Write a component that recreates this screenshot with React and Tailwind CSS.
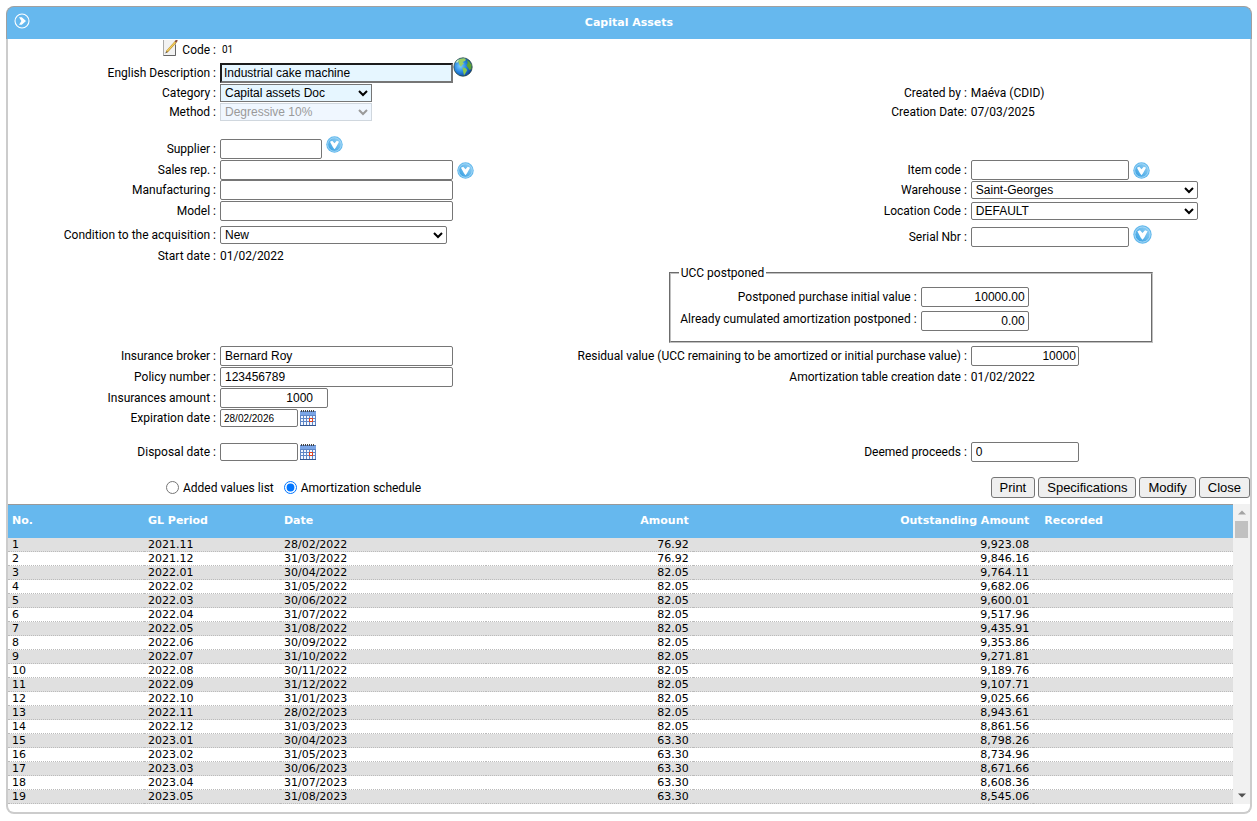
import React, { useState } from 'react'
import clsx from 'clsx'

const schedule = [
    ['2021.11', '28/02/2022', '76.92', '9,923.08'],
    ['2021.12', '31/03/2022', '76.92', '9,846.16'],
    ['2022.01', '30/04/2022', '82.05', '9,764.11'],
    ['2022.02', '31/05/2022', '82.05', '9,682.06'],
    ['2022.03', '30/06/2022', '82.05', '9,600.01'],
    ['2022.04', '31/07/2022', '82.05', '9,517.96'],
    ['2022.05', '31/08/2022', '82.05', '9,435.91'],
    ['2022.06', '30/09/2022', '82.05', '9,353.86'],
    ['2022.07', '31/10/2022', '82.05', '9,271.81'],
    ['2022.08', '30/11/2022', '82.05', '9,189.76'],
    ['2022.09', '31/12/2022', '82.05', '9,107.71'],
    ['2022.10', '31/01/2023', '82.05', '9,025.66'],
    ['2022.11', '28/02/2023', '82.05', '8,943.61'],
    ['2022.12', '31/03/2023', '82.05', '8,861.56'],
    ['2023.01', '30/04/2023', '63.30', '8,798.26'],
    ['2023.02', '31/05/2023', '63.30', '8,734.96'],
    ['2023.03', '30/06/2023', '63.30', '8,671.66'],
    ['2023.04', '31/07/2023', '63.30', '8,608.36'],
    ['2023.05', '31/08/2023', '63.30', '8,545.06'],
]

const LookupIcon = ({ size = 17 }) => (
    <svg width={size} height={size} viewBox="0 0 18 18" aria-hidden="true">
        <defs>
            <linearGradient id="lookup" x1="0" y1="1" x2="1" y2="0">
                <stop offset="0" stopColor="#2f9be0" />
                <stop offset="1" stopColor="#9ad4f6" />
            </linearGradient>
        </defs>
        <circle cx="9" cy="9" r="8.7" fill="#62b8ec" />
        <circle cx="9" cy="9" r="7.2" fill="url(#lookup)" stroke="#b5dff8" strokeWidth="0.8" />
        <path d="M4.2 6 L6.6 5 L9 7.6 L11.4 5 L13.8 6 L10.6 12 L9 14 L7.4 12 Z" fill="#fff" />
    </svg>
)

const GlobeIcon = () => (
    <svg width="20" height="20" viewBox="0 0 20 20" aria-hidden="true">
        <defs>
            <radialGradient id="globe" cx="0.35" cy="0.45" r="0.65">
                <stop offset="0" stopColor="#7fd0ff" />
                <stop offset="0.5" stopColor="#2787e2" />
                <stop offset="1" stopColor="#0b3f94" />
            </radialGradient>
        </defs>
        <circle cx="10" cy="10" r="9.2" fill="url(#globe)" stroke="#2c4a3c" strokeWidth="0.8" />
        <path d="M5 3 Q8 .9 12 1.4 L13 3 L11 4.5 L9.5 5 L11 6.5 L9 8 L8 10 L6.5 8 L5.5 5.5 Z" fill="#9ccf62" />
        <path d="M14 3 L16.5 4.8 L18.6 8 L18.4 12 L16.5 13 L15 10.5 L13.4 8.5 L14.8 6 Z" fill="#5ea336" />
        <path d="M9.4 10.4 L12.4 11 L14.2 13 L12.6 16 L11 18.4 L10.2 14.8 Z" fill="#8ac84c" />
        <path d="M2.6 5.6 Q4 3 6 2.4 L4.6 5.4 Z" fill="#d6f2c0" />
    </svg>
)

const CalendarIcon = () => (
    <svg width="16" height="16" viewBox="0 0 16 16" shapeRendering="crispEdges" aria-hidden="true">
        <rect x="0" y="1" width="16" height="15" fill="#5f86c6" />
        <rect x="0" y="2" width="16" height="3" fill="#7ba5e6" />
        <rect x="0" y="15" width="16" height="1" fill="#34568f" />
        <path d="M1 0h1v2h-1zM3 0h1v2h-1zM5 0h1v2h-1zM7 0h1v2h-1zM9 0h1v2h-1zM11 0h1v2h-1zM13 0h1v2h-1z" fill="#444" />
        <path d="M1 6h2v2h-2zM4 6h2v2h-2zM7 6h2v2h-2zM10 6h2v2h-2zM13 6h2v2h-2zM1 9h2v2h-2zM4 9h2v2h-2zM7 9h2v2h-2zM13 9h2v2h-2zM1 12h2v3h-2zM4 12h2v3h-2zM7 12h2v3h-2zM10 12h2v3h-2zM13 12h2v3h-2z" fill="#f2f7ff" />
        <path d="M9 8h4v4h-4z" fill="#e0431f" />
        <path d="M10 9h2v2h-2z" fill="#fff" />
    </svg>
)

const EditIcon = () => (
    <svg width="15" height="16" viewBox="0 0 15 16" aria-hidden="true">
        <path d="M0.5 0V15.5H12.5V0" fill="#f2f2f2" stroke="#aaa" />
        <path d="M0.5 15.5H12.5V5" fill="none" stroke="#666" />
        <path d="M3.6 12 L12.8 1.8" stroke="#b98a2c" strokeWidth="2.2" />
        <path d="M4 11.4 L12.6 1.8" stroke="#f8d662" strokeWidth="1.1" />
        <path d="M12.4 2.2 L14.2 0.2" stroke="#8a4a3a" strokeWidth="1.8" />
        <path d="M2.6 13.2 L4 11.6" stroke="#333" strokeWidth="1" />
    </svg>
)

const Row = ({ label, id, side = 'left', className, children }) => {
    const labelClass = clsx(
        'shrink-0 text-right whitespace-nowrap leading-5',
        side === 'left' ? 'w-[208px]' : 'w-[62%]'
    )
    return (
        <div className={clsx('flex gap-1', className)}>
            {id ? <label htmlFor={id} className={labelClass}>{label}</label> : <span className={labelClass}>{label}</span>}
            {children}
        </div>
    )
}

const TextBox = ({ className, ...props }) => (
    <input
        type="text"
        className={clsx('rounded-[2px] border border-[#767676] font-["Liberation_Sans",Arial,sans-serif]', className)}
        {...props}
    />
)

const Select = ({ className, options, ...props }) => (
    <select
        className={clsx('rounded-[2px] border font-["Liberation_Sans",Arial,sans-serif] text-xs leading-4', className)}
        {...props}
    >
        {options.map((option) => <option key={option}>{option}</option>)}
    </select>
)

const IconButton = ({ label, className, children }) => (
    <button type="button" aria-label={label} className={clsx('shrink-0', className)}>{children}</button>
)

const LeftFields = () => (
    <div className="flex w-[40%] flex-col">
        <Row
            className="h-[22px] items-center"
            label={<span className="flex justify-end gap-1"><EditIcon />Code :</span>}
        >
            <span className="pl-0.5 text-[10px] leading-5">01</span>
        </Row>
        <Row label="English Description :" id="description" className="h-[22px] items-end">
            <div className="flex items-end">
                <TextBox
                    id="description"
                    defaultValue="Industrial cake machine"
                    className="h-5 w-[233px] rounded-none border-2 border-t-[#1c1c1c] border-r-[#767676] border-b-[#767676] border-l-[#1c1c1c] bg-[#e6f6ff] px-0.5 text-xs"
                />
                <IconButton label="Translations" className="mb-1.5"><GlobeIcon /></IconButton>
            </div>
        </Row>
        <Row label="Category :" id="category" className="mt-px h-[18px] items-center">
            <Select id="category" options={['Capital assets Doc']} className="h-[18px] w-[152px] rounded-none border-[#767676] bg-[#e6f6ff]" />
        </Row>
        <Row label="Method :" id="method" className="mt-px h-[18px] items-center">
            <Select id="method" disabled options={['Degressive 10%']} className="h-[18px] w-[152px] rounded-none border-[#d0d7de] bg-[#f0f7ff] text-[#9a9a9a]" />
        </Row>
        <Row label="Supplier :" id="supplier" className="mt-[15px] h-[23px] items-end">
            <TextBox id="supplier" className="h-5 w-[102px] px-1 text-xs" />
            <IconButton label="Find supplier" className="self-start"><LookupIcon /></IconButton>
        </Row>
        <Row label="Sales rep. :" id="sales-rep" className="mt-px h-5 items-center">
            <TextBox id="sales-rep" className="h-5 w-[233px] px-1 text-xs" />
            <IconButton label="Find sales rep."><LookupIcon /></IconButton>
        </Row>
        <Row label="Manufacturing :" id="manufacturing" className="h-5 items-center">
            <TextBox id="manufacturing" className="h-5 w-[233px] px-1 text-xs" />
        </Row>
        <Row label="Model :" id="model" className="mt-px h-5 items-center">
            <TextBox id="model" className="h-5 w-[233px] px-1 text-xs" />
        </Row>
        <Row label="Condition to the acquisition :" id="condition" className="mt-1 h-5 items-center">
            <Select id="condition" options={['New']} className="h-[18px] w-[227px] border-[#767676]" />
        </Row>
        <Row label="Start date :" className="h-[22px] items-center">
            <span>01/02/2022</span>
        </Row>
        <Row label="Insurance broker :" id="broker" className="mt-[79px] h-5 items-center">
            <TextBox id="broker" defaultValue="Bernard Roy" className="h-5 w-[233px] px-1 text-xs" />
        </Row>
        <Row label="Policy number :" id="policy" className="mt-px h-5 items-center">
            <TextBox id="policy" defaultValue="123456789" className="h-5 w-[233px] px-1 text-xs" />
        </Row>
        <Row label="Insurances amount :" id="insured" className="mt-px h-5 items-center">
            <TextBox id="insured" defaultValue="1000" className="h-5 w-[108px] pr-3.5 text-right text-xs" />
        </Row>
        <Row label="Expiration date :" id="expiration" className="mt-px h-[18px] items-center">
            <div className="flex items-center gap-0.5">
                <TextBox id="expiration" defaultValue="28/02/2026" className="h-[18px] w-[78px] px-[3px] text-[10px]" />
                <IconButton label="Pick expiration date"><CalendarIcon /></IconButton>
            </div>
        </Row>
        <Row label="Disposal date :" id="disposal" className="mt-4 h-[18px] items-center">
            <div className="flex items-center gap-0.5">
                <TextBox id="disposal" className="h-[18px] w-[78px] px-[3px] text-[10px]" />
                <IconButton label="Pick disposal date"><CalendarIcon /></IconButton>
            </div>
        </Row>
    </div>
)

const RightFields = () => (
    <div className="flex flex-1 flex-col">
        <Row side="right" label="Created by :" className="mt-[45px] h-[18px] items-center">
            <span>Maéva (CDID)</span>
        </Row>
        <Row side="right" label="Creation Date:" className="mt-px h-[18px] items-center">
            <span>07/03/2025</span>
        </Row>
        <Row side="right" label="Item code :" id="item" className="mt-[39px] h-5 items-center">
            <TextBox id="item" className="h-5 w-[158px] px-1 text-xs" />
            <IconButton label="Find item"><LookupIcon /></IconButton>
        </Row>
        <Row side="right" label="Warehouse :" id="warehouse" className="mt-px h-[18px] items-center">
            <Select id="warehouse" options={['Saint-Georges']} className="h-[18px] w-[227px] border-[#767676]" />
        </Row>
        <Row side="right" label="Location Code :" id="location" className="mt-[3px] h-[18px] items-center">
            <Select id="location" options={['DEFAULT']} className="h-[18px] w-[227px] border-[#767676]" />
        </Row>
        <Row side="right" label="Serial Nbr :" id="serial" className="mt-[5px] h-[22px] items-end">
            <TextBox id="serial" className="h-5 w-[158px] px-1 text-xs" />
            <IconButton label="Find serial number" className="self-start"><LookupIcon size={19} /></IconButton>
        </Row>
        <fieldset className="mt-[18px] ml-[22%] flex h-[78px] w-[65%] flex-col gap-1 border-2 border-[#c0c0c0] pt-1.5 [border-style:groove]">
            <legend className="ml-2 px-0.5 leading-4">UCC postponed</legend>
            <div className="flex w-[74.5%] justify-end gap-1">
                <label htmlFor="postponed" className="leading-5 whitespace-nowrap">Postponed purchase initial value :</label>
                <TextBox id="postponed" defaultValue="10000.00" className="h-5 w-[108px] px-[3px] text-right text-xs" />
            </div>
            <div className="flex w-[74.5%] justify-end gap-1">
                <label htmlFor="cumulated" className="leading-4 whitespace-nowrap">Already cumulated amortization postponed :</label>
                <TextBox id="cumulated" defaultValue="0.00" className="h-5 w-[108px] px-[3px] text-right text-xs" />
            </div>
        </fieldset>
        <Row side="right" label="Residual value (UCC remaining to be amortized or initial purchase value) :" id="residual" className="mt-[3px] h-5 items-center">
            <TextBox id="residual" defaultValue="10000" className="h-5 w-[108px] px-0.5 text-right text-xs" />
        </Row>
        <Row side="right" label="Amortization table creation date :" className="mt-px h-5 items-center">
            <span>01/02/2022</span>
        </Row>
        <Row side="right" label="Deemed proceeds :" id="proceeds" className="mt-[55px] h-5 items-center">
            <TextBox id="proceeds" defaultValue="0" className="h-5 w-[108px] px-1 text-xs" />
        </Row>
    </div>
)

const Toolbar = () => {
    const [view, setView] = useState('schedule')
    return (
        <div className="mt-[15px] mb-1.5 flex h-[21px] items-center justify-between pl-[158px]">
            <div className="flex items-center gap-2.5">
                <label className="flex items-center gap-1">
                    <input type="radio" name="view" className="size-[13px]" checked={view === 'values'} onChange={() => setView('values')} />
                    Added values list
                </label>
                <label className="flex items-center gap-1">
                    <input type="radio" name="view" className="size-[13px]" checked={view === 'schedule'} onChange={() => setView('schedule')} />
                    Amortization schedule
                </label>
            </div>
            <div className="flex gap-[3px]">
                {['Print', 'Specifications', 'Modify', 'Close'].map((name) => (
                    <button
                        key={name}
                        type="button"
                        className="h-[21px] rounded-[3px] border border-[#767676] bg-[#efefef] px-2 font-['Liberation_Sans',Arial,sans-serif] text-[13px] leading-4"
                    >
                        {name}
                    </button>
                ))}
            </div>
        </div>
    )
}

const ScheduleTable = () => (
    <div className="flex h-[300px] font-['DejaVu_Sans',Verdana,sans-serif] text-[11px]">
        <div className="flex-1 overflow-hidden">
            <table className="w-full table-fixed border-collapse">
                <thead>
                    <tr className="h-[33px] border-t border-[#999] bg-[#66b8ee] text-left text-white">
                        <th className="w-[11.1%] px-1">No.</th>
                        <th className="w-[11.1%] px-1">GL Period</th>
                        <th className="w-[16.8%] px-1">Date</th>
                        <th className="w-[16.9%] px-1 text-right">Amount</th>
                        <th className="px-1 text-right">Outstanding Amount</th>
                        <th className="w-[16.3%] px-[11px]">Recorded</th>
                    </tr>
                </thead>
                <tbody>
                    {schedule.map(([period, date, amount, outstanding], i) => (
                        <tr key={period} className="h-3.5 border-b border-dotted border-[#bbb] leading-[13px] odd:bg-[#e0e0e0]">
                            <td className="px-1">{i + 1}</td>
                            <td className="px-1">{period}</td>
                            <td className="px-1">{date}</td>
                            <td className="px-1 text-right">{amount}</td>
                            <td className="px-1 text-right">{outstanding}</td>
                            <td></td>
                        </tr>
                    ))}
                </tbody>
            </table>
        </div>
        {/* scrollbar */}
        <div className="flex w-[17px] shrink-0 flex-col items-center justify-between bg-[#f1f1f1]">
            <div className="flex flex-col items-center">
                <svg width="17" height="17" viewBox="0 0 17 17"><path d="M5 10.5h8L9 6.5z" fill="#a3a3a3" /></svg>
                <div className="h-[17px] w-[13px] bg-[#c1c1c1]"></div>
            </div>
            <svg width="17" height="17" viewBox="0 0 17 17"><path d="M5 6.5h8L9 10.5z" fill="#505050" /></svg>
        </div>
    </div>
)

export default function App() {
    return (
        <main className="pt-1.5 pr-[5px] pb-1.5 pl-1.5 font-[Roboto,Tahoma,sans-serif] text-xs text-black">
            <header className="flex h-[33px] items-center rounded-t-lg border border-b-0 border-[#a0a0a0] bg-[#66b8ee] px-[7px]">
                <button type="button" aria-label="Menu" className="mb-1">
                    <svg width="16" height="16" viewBox="0 0 16 16">
                        <circle cx="8" cy="8" r="7" fill="none" stroke="#fff" strokeWidth="1.1" />
                        <path d="M5 4.2 L7.8 4.2 L12 8 L7.8 11.8 L5 11.8 L7.4 8 Z" fill="#fff" />
                    </svg>
                </button>
                <h1 className="flex-1 pr-4 text-center font-['DejaVu_Sans',Verdana,sans-serif] text-[11px] font-bold text-white">Capital Assets</h1>
            </header>
            <section className="rounded-b-lg border-2 border-t-0 border-[#ccc] pb-2">
                <form>
                    <div className="flex">
                        <LeftFields />
                        <RightFields />
                    </div>
                    <Toolbar />
                </form>
                <ScheduleTable />
            </section>
        </main>
    )
}
